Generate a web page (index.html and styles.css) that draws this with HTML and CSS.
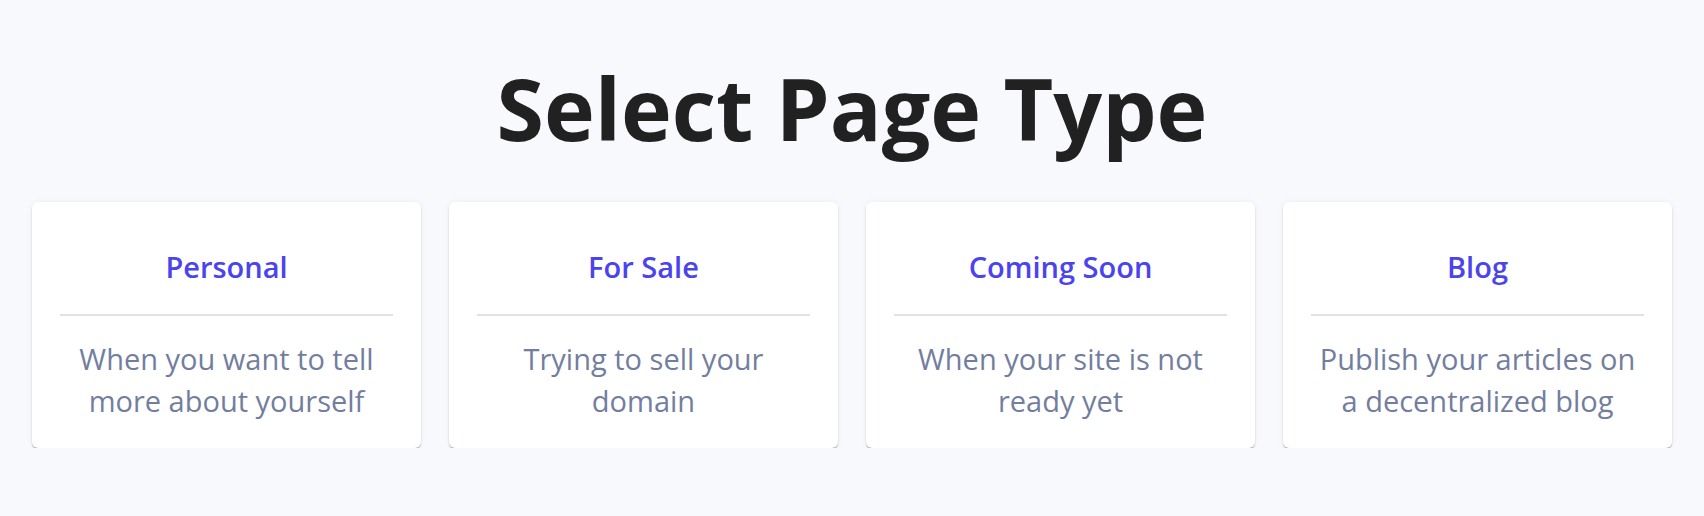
FILE: index.html
```html
<!DOCTYPE html>
<html lang="en">
<head>
<meta charset="utf-8">
<title>Select Page Type</title>
<link rel="stylesheet" href="styles.css">
</head>
<body>
<main class="page">
  <h1 class="page-title">Select Page Type</h1>
  <div class="cards">
    <div class="card">
      <div class="card-title">Personal</div>
      <hr class="card-divider">
      <p class="card-desc">When you want to tell more about yourself</p>
    </div>
    <div class="card">
      <div class="card-title">For Sale</div>
      <hr class="card-divider">
      <p class="card-desc">Trying to sell your domain</p>
    </div>
    <div class="card">
      <div class="card-title">Coming Soon</div>
      <hr class="card-divider">
      <p class="card-desc">When your site is not ready yet</p>
    </div>
    <div class="card">
      <div class="card-title">Blog</div>
      <hr class="card-divider">
      <p class="card-desc">Publish your articles on a decentralized blog</p>
    </div>
  </div>
</main>
</body>
</html>
```

FILE: styles.css
```css
html, body {
  margin: 0;
  padding: 0;
}
body {
  background: #f8f9fd;
  font-family: "Open Sans", "Noto Sans", sans-serif;
  color: #212121;
}
.page {
  padding: 48px 32px 0;
}
.page-title {
  margin: 0 0 34px;
  text-align: center;
  font-size: 86px;
  font-weight: 700;
  line-height: 120px;
  color: #212121;
}
.cards {
  display: grid;
  grid-template-columns: repeat(4, 1fr);
  gap: 28px;
}
.card {
  background: #ffffff;
  border-radius: 6px;
  box-shadow: 0 2px 2px -1px rgba(0,0,0,0.4), 0 1px 2px 0 rgba(0,0,0,0.1), 0 0 6px 0 rgba(0,0,0,0.05);
  padding: 46px 28px 26px;
  text-align: center;
}
.card-title {
  font-size: 29px;
  font-weight: 600;
  line-height: 37px;
  color: #4a43ee;
}
.card-divider {
  border: 0;
  border-top: 2px solid #e2e2e4;
  margin: 29px 0 22px;
}
.card-desc {
  margin: 0;
  font-size: 29px;
  line-height: 42px;
  color: #737e9e;
}
```
